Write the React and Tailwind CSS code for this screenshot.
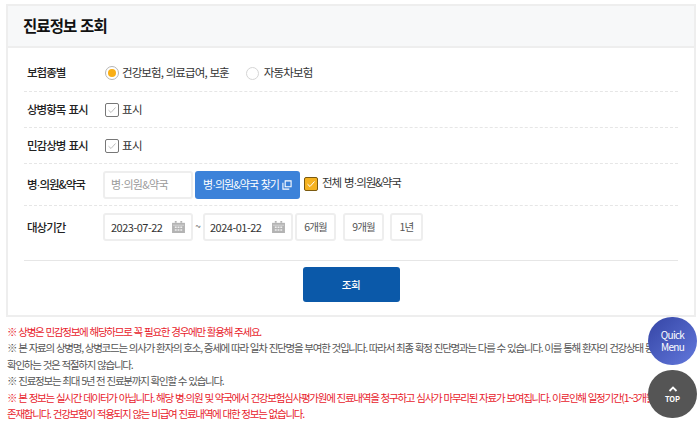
const kr = { fontFamily: '"Noto Sans CJK KR", "Noto Sans", sans-serif' };

function Dot() {
  return <span style={{ fontFamily: '"Liberation Sans", sans-serif' }}>·</span>;
}

function Cal() {
  return (
    <svg width="13" height="12" viewBox="0 0 14 13" className="shrink-0">
      <path d="M0 2h14v11H0z" fill="#b3b3b3" />
      <path d="M3 0h2v2H3zM9 0h2v2H9z" fill="#b3b3b3" />
      <path d="M1 4h12v1H1z" fill="#d8d8d8" />
      <path d="M3 6h2v1.500H3zM6 6h2v1.500H6zM9 6h2v1.500H9zM3 9h2v1.500H3zM6 9h2v1.500H6zM9 9h2v1.500H9z" fill="#eeeeee" />
    </svg>
  );
}

function Check({ on }) {
  return (
    <span className={on ? "flex h-[14px] w-[14px] items-center justify-center rounded-[2px] border border-[#7a5a10] bg-[#f5b21f]" : "flex h-[14px] w-[14px] items-center justify-center rounded-[2px] border border-[#777777] bg-white"}>
      <svg width="10" height="10" viewBox="0 0 10 10" fill="none">
        <path d="M1.500 5.200 4 7.500 8.500 2.500" stroke={on ? "#ffffff" : "#bdbdbd"} strokeWidth="1" />
      </svg>
    </span>
  );
}

function Row({ label, h, children, last, top, labelTop }) {
  return (
    <div className={`flex items-center ${top ?? ""} ${last ? "" : "border-b border-dashed border-[#e6e6e6]"}`} style={{ height: h }}>
      <div className={`w-[79px] pl-[3px] text-[11.500px] font-medium tracking-[-1px] [word-spacing:1.500px] text-[#222] ${labelTop ?? ""}`}>{label}</div>
      <div className="flex items-center">{children}</div>
    </div>
  );
}

function Small({ w, children, ml }) {
  return (
    <span className={`flex h-[28px] ${w} ${ml} items-center justify-center rounded-[3px] border-2 border-[#eeeeee] bg-white text-[10.500px] tracking-[-0.8px] text-[#555]`}>{children}</span>
  );
}

export default function App() {
  return (
    <div style={kr} className="relative h-[424px] w-[700px] overflow-hidden bg-white">
      <div className="pt-[4px] pl-[6px] pr-[4px]">
        <div className="h-[313px] border-2 border-[#eeeeee]">
          <div className="flex h-[42px] items-center border-b-2 border-[#eeeeee] bg-[#f7f8f9] pl-[15px]">
            <h1 className="text-[15.500px] font-bold tracking-[-0.9px] [word-spacing:1px] text-[#111]">진료정보 조회</h1>
          </div>
          <div className="px-[16px]">
            <Row label="보험종별" h={44} top="pt-[7px]">
              <span className="ml-[2px] flex items-center gap-[3px]">
                <span className="flex h-[14px] w-[14px] items-center justify-center rounded-full border border-[#b5b5b5] bg-white">
                  <span className="h-[8px] w-[8px] rounded-full bg-[#f9ae14]" />
                </span>
                <span className="text-[11.500px] tracking-[-0.9px] [word-spacing:1px] text-[#333]">건강보험, 의료급여, 보훈</span>
              </span>
              <span className="ml-[17px] flex items-center gap-[5px]">
                <span className="h-[13px] w-[13px] rounded-full border border-[#d5d5d5] bg-white" />
                <span className="text-[11.500px] tracking-[-0.8px] text-[#333]">자동차보험</span>
              </span>
            </Row>
            <Row label="상병항목 표시" h={36}>
              <span className="ml-[2px]"><Check /></span>
              <span className="ml-[3px] text-[11.500px] tracking-[-0.5px] text-[#333]">표시</span>
            </Row>
            <Row label="민감상병 표시" h={36}>
              <span className="ml-[2px]"><Check /></span>
              <span className="ml-[3px] text-[11.500px] tracking-[-0.5px] text-[#333]">표시</span>
            </Row>
            <Row label={<>병<Dot />의원&약국</>} h={42} labelTop="pt-[2px]">
              <span className="flex h-[28px] w-[90px] items-center rounded-[3px] border-2 border-[#eeeeee] bg-white pl-[6px] text-[11px] tracking-[-0.7px] text-[#9a9a9a]">병<Dot />의원&약국</span>
              <span className="ml-[2px] flex h-[28px] w-[105px] items-center justify-center gap-[3px] rounded-[3px] bg-[#3c82d9] text-[11px] tracking-[-0.95px] [word-spacing:1px] text-white">
                <span>병<Dot />의원&약국 찾기</span>
                <svg width="10" height="10" viewBox="0 0 11 11" fill="none" stroke="#fff" strokeWidth="1.200">
                  <path d="M3.500 1h6.500v6.500H3.500z" />
                  <path d="M1 3v7h7" />
                </svg>
              </span>
              <span className="mb-[2px] ml-[4px] flex items-center gap-[4px]">
                <Check on />
                <span className="text-[11.500px] tracking-[-1.100px] [word-spacing:1.500px] text-[#333]">전체 병<Dot />의원&약국</span>
              </span>
            </Row>
            <Row label="대상기간" h={42} last labelTop="pt-[1px]">
              <span className="flex h-[28px] w-[90px] items-center justify-between rounded-[3px] border-2 border-[#eeeeee] bg-white px-[6px] text-[11px] tracking-[-0.5px] text-[#333]">2023-07-22<Cal /></span>
              <span className="w-[10px] pb-[3px] text-center text-[10px] text-[#666]">~</span>
              <span className="flex h-[28px] w-[90px] items-center justify-between rounded-[3px] border-2 border-[#eeeeee] bg-white pl-[5px] pr-[6px] text-[11px] tracking-[-0.5px] text-[#333]">2024-01-22<Cal /></span>
              <Small w="w-[41px]" ml="ml-[2px]">6개월</Small>
              <Small w="w-[41px]" ml="ml-[7px]">9개월</Small>
              <Small w="w-[33px]" ml="ml-[6px]">1년</Small>
            </Row>
            <div className="mt-[12px] flex justify-center border-t border-[#e6e6e6] pt-[6px]">
              <button className="h-[35px] w-[97px] rounded-[3px] bg-[#0b59a9] text-[10.500px] font-medium tracking-[-0.3px] text-white">조회</button>
            </div>
          </div>
        </div>
      </div>
      <div className="mt-[7px] pl-[7px] text-[10.500px] leading-[16.400px] tracking-[-1.25px] [word-spacing:0.9px] whitespace-nowrap">
        <p className="text-[#e8222c]">※ 상병은 민감정보에 해당하므로 꼭 필요한 경우에만 활용해 주세요.</p>
        <p className="text-[#555]">※ 본 자료의 상병명, 상병코드는 의사가 환자의 호소, 증세에 따라 일차 진단명을 부여한 것입니다. 따라서 최종 확정 진단명과는 다를 수 있습니다. 이를 통해 환자의 건강상태 등을</p>
        <p className="text-[#555]">확인하는 것은 적절하지 않습니다.</p>
        <p className="text-[#555]">※ 진료정보는 최대 5년 전 진료분까지 확인할 수 있습니다.</p>
        <p className="text-[#e8222c]">※ 본 정보는 실시간 데이터가 아닙니다. 해당 병<Dot />의원 및 약국에서 건강보험심사평가원에 진료내역을 청구하고 심사가 마무리된 자료가 보여집니다. 이로인해 일정기간(1~3개월)</p>
        <p className="text-[#e8222c]">존재합니다. 건강보험이 적용되지 않는 비급여 진료내역에 대한 정보는 없습니다.</p>
      </div>
      <div className="absolute left-[648px] top-[317px] flex h-[48px] w-[49px] flex-col items-center justify-center rounded-full bg-gradient-to-br from-[#3545a5] to-[#6378dc] text-[10px] leading-[12px] tracking-[-0.7px] text-white">
        <span>Quick</span>
        <span>Menu</span>
      </div>
      <div className="absolute left-[648px] top-[370px] flex h-[48px] w-[49px] flex-col items-center justify-center rounded-full bg-[#555555] text-white">
        <svg width="10" height="6" viewBox="0 0 10 6" fill="none" stroke="#fff" strokeWidth="1.800"><path d="M1.500 5 5 1.500 8.500 5" /></svg>
        <span className="mt-[2px] text-[7.500px] font-bold leading-[9px]">TOP</span>
      </div>
    </div>
  );
}
